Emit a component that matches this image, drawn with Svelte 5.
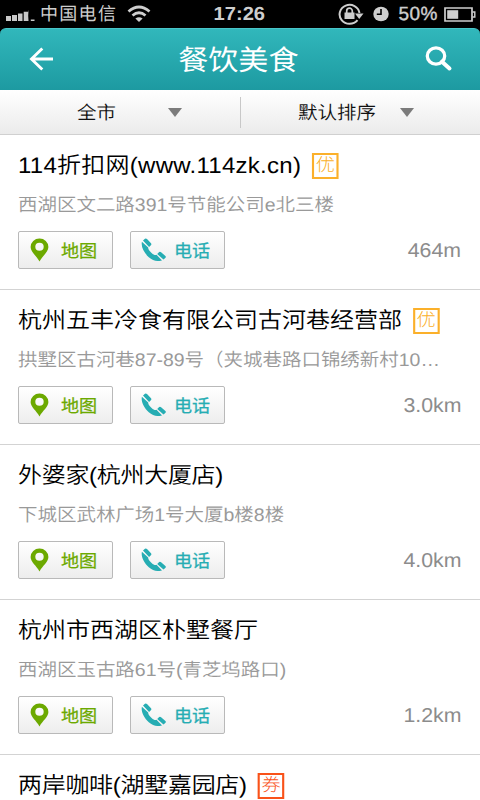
<script>
  const shops = [
    { name: '114折扣网(www.114zk.cn)', tag: '优', address: '西湖区文二路391号节能公司e北三楼', distance: '464m', tracking: 0.25 },
    { name: '杭州五丰冷食有限公司古河巷经营部', tag: '优', address: '拱墅区古河巷87-89号（夹城巷路口锦绣新村10…', distance: '3.0km', tracking: 0 },
    { name: '外婆家(杭州大厦店)', address: '下城区武林广场1号大厦b楼8楼', distance: '4.0km', tracking: -0.28 },
    { name: '杭州市西湖区朴墅餐厅', address: '西湖区玉古路61号(青芝坞路口)', distance: '1.2km', tracking: 0 },
    { name: '两岸咖啡(湖墅嘉园店)', tag: '券', tracking: -0.27 }
  ];
</script>

<div class="screen">
  <div class="status">
    <div class="side">
      <svg class="signal" width="30" height="14" viewBox="0 0 30 14" fill="#c9c9c9">
        <path d="M0 8h5v5H0zM6 7h5v6H6zM12 5.500h4.500V13H12zM17.700 3.800h4.500V13h-4.500zM23 2.500h-.300V13h-.300zM24.800 11.500h3.700V13h-3.700z" />
      </svg>
      <span class="carrier">中国电信</span>
      <svg class="wifi" width="24" height="18" viewBox="0 0 24 18" fill="none" stroke="#cecece" stroke-width="2.800">
        <path d="M1.500 6.500Q12-2.500 22.500 6.500M5.500 10.500Q12 5 18.500 10.500" />
        <path d="M12 17L8.400 13.600Q12 10.800 15.600 13.600Z" fill="#cecece" stroke="none" />
      </svg>
    </div>
    <span class="clock">17:26</span>
    <div class="side right">
      <svg width="26" height="24" viewBox="0 0 26 24" fill="none" stroke="#cecece" stroke-width="2">
        <path d="M19.500 18.200A10 9.500 0 1 1 21.500 11" />
        <path d="M17 11.500h8.500L21.200 17z" fill="#cecece" stroke="none" />
        <path d="M6.500 10.500h10v6.500h-10z" fill="#cecece" stroke="none" />
        <path d="M8.700 11V9a2.800 2.800 0 0 1 5.600 0v2" stroke-width="1.700" />
      </svg>
      <svg class="alarm" width="16" height="16" viewBox="0 0 16 16">
        <ellipse cx="8" cy="8" rx="7.700" ry="7.300" fill="#cecece" />
        <path d="M8 3v5.300H3.800" fill="none" stroke="#000" stroke-width="1.600" />
      </svg>
      <span class="percent">50%</span>
      <svg class="battery" width="32" height="15" viewBox="0 0 32 15">
        <path d="M1 1h27v13H1z" fill="none" stroke="#cecece" stroke-width="1.700" />
        <path d="M3.200 3.200h11v8.600h-11z" fill="#cecece" />
        <path d="M28.500 5h2.300v5h-2.300" fill="none" stroke="#cecece" stroke-width="1.400" />
      </svg>
    </div>
  </div>

  <header>
    <svg width="24" height="24" viewBox="0 0 24 24" fill="none" stroke="#fff" stroke-width="2.900">
      <path d="M13.300 1.500L2.500 12l10.800 10.500M2.500 12H24" />
    </svg>
    <h1>餐饮美食</h1>
    <svg width="28" height="26" viewBox="0 0 28 26" fill="none" stroke="#fff">
      <ellipse cx="11" cy="10" rx="8.700" ry="8.200" stroke-width="3.300" />
      <path d="M17 15.700l7.500 6.800" stroke-width="4" stroke-linecap="round" />
    </svg>
  </header>

  <nav>
    <div class="filter city"><span>全市</span><i></i></div>
    <div class="filter sort"><span>默认排序</span><i></i></div>
  </nav>

  <main>
    {#each shops as shop}
      <article>
        <h2 style:letter-spacing={`${shop.tracking}px`}>{shop.name}{#if shop.tag}<b class:coupon={shop.tag === '券'}>{shop.tag}</b>{/if}</h2>
        {#if shop.address}
          <p>{shop.address}</p>
          <div class="actions">
            <button class="map">
              <svg width="19" height="24" viewBox="0 0 19 24">
                <path fill="#6ca900" fill-rule="evenodd" d="M9.500.500A8.800 8.500 0 0 0 .600 9c0 5 5.700 8.500 8.900 14.500C12.700 17.500 18.400 14 18.400 9A8.800 8.500 0 0 0 9.500.500zm0 4.300a4.200 4 0 1 1 0 8 4.200 4 0 0 1 0-8z" />
              </svg>
              <span>地图</span>
            </button>
            <button class="call">
              <svg width="25" height="23" viewBox="0 0 25 23" fill="#26adb3">
                <path d="M.900 3.700C-.200 9 3 15 7.800 19.200c4.300 3.600 9.200 4.600 13.200 3.300l-5.500-5.700c-1.500.600-3-.200-4.900-1.900C8.300 12.800 7 11 7.200 9.400z" />
                <path d="M2 2.600L4 .700q1-.700 2 .300l4 4.300q.800 1-.100 1.900L8.100 8.900zM16.200 16l2-1.900q.900-.600 1.900.200l4.300 3.600q.900.900.100 1.800l-2 1.900z" />
              </svg>
              <span>电话</span>
            </button>
            <span class="distance">{shop.distance}</span>
          </div>
        {/if}
      </article>
    {/each}
  </main>
</div>

<style>
  :global(body) { margin: 0; background: #fff; }
  .screen {
    width: 480px; height: 800px; overflow: hidden;
    background: linear-gradient(#000 40px, #fff 40px);
    font-family: "Liberation Sans", "Noto Sans CJK SC", sans-serif;
    font-weight: 350;
    text-rendering: geometricPrecision;
    display: flex; flex-direction: column;
  }
  svg { display: block; flex: none; }
  span, h1, h2, p { white-space: nowrap; }
  h1, h2, p { margin: 0; font-weight: 350; }
  .status {
    height: 28px; flex: none; background: #000; color: #cecece;
    display: flex; align-items: center; justify-content: space-between;
  }
  .side { width: 200px; display: flex; align-items: center; }
  .signal { margin: 2px 0 0 6px; }
  .carrier { font-size: 18px; letter-spacing: 1.300px; margin-left: 4px; line-height: 24px; font-weight: 400; }
  .wifi { margin-left: 10px; }
  .clock { font-size: 19px; font-weight: 700; margin-top: 2px; transform: translateX(-1px) scaleX(1.060); }
  .right { justify-content: flex-end; }
  .alarm { margin-left: 9px; }
  .percent { font-size: 19px; -webkit-text-stroke: .4px #cecece; letter-spacing: .5px; margin: 2px 0 0 9px; }
  .battery { margin: 0 4px 0 6px; }
  header {
    height: 62px; flex: none; box-sizing: border-box; padding: 0 27px 0 29px;
    display: flex; align-items: center; justify-content: space-between;
    background: linear-gradient(#31b7bb, #1d9aa1);
    border-top: 1px solid #49c5c8; border-radius: 6px 6px 0 0;
  }
  h1 { font-size: 28.200px; line-height: 40px; color: #fff; font-weight: 400; transform: translateX(-1px) scaleX(1.065); }
  header svg { margin-top: -1px; }
  nav {
    height: 45px; flex: none; box-sizing: border-box; display: flex; align-items: center;
    background: linear-gradient(#fff, #ebebeb); border-bottom: 1px solid #d0d0d0;
  }
  .filter {
    width: 240px; height: 31px; box-sizing: border-box; display: flex; align-items: center;
    font-size: 18.300px; color: #111;
  }
  .filter span { transform: scaleX(1.065); transform-origin: left; }
  .city { width: 241px; padding-left: 77px; border-right: 1px solid #c8c8c8; }
  .sort { width: 239px; padding-left: 57px; }
  i { border: 7px solid transparent; border-top: 9px solid #7b7b7b; border-bottom: 0; }
  .city i { margin-left: 54px; }
  .sort i { margin-left: 29px; }
  article {
    height: 155px; box-sizing: border-box; padding: 13px 18px 0;
    border-bottom: 1px solid #d3d3d3; background: #fff;
  }
  h2, p { width: max-content; transform: scaleX(1.065); transform-origin: left; }
  h2 { font-size: 22.540px; height: 35px; line-height: 35px; color: #000; display: flex; align-items: center; }
  h2 b {
    width: 25.500px; height: 26px; box-sizing: border-box; margin-left: 10px;
    border: 2px solid #fbb02a; color: #fbb02a; font-size: 18px; font-weight: 300;
    line-height: 21px; text-align: center; letter-spacing: 0;
  }
  h2 b.coupon { color: #f95219; border-color: #f95219; }
  p { font-size: 18.300px; height: 42px; line-height: 44px; color: #999; }
  .actions { height: 38px; margin-top: 6px; display: flex; align-items: center; }
  button {
    width: 95px; height: 38px; box-sizing: border-box; padding: 0; margin-right: 17px;
    border: 1px solid #b9b9b9; border-radius: 2px; background: linear-gradient(#fff, #ededed);
    font-family: inherit; font-size: 17px; font-weight: 400; -webkit-text-stroke: .25px currentColor;
    display: flex; align-items: center;
  }
  button span { margin-top: -2px; transform: scaleX(1.065); transform-origin: left; }
  button svg { margin-top: -1px; }
  .map { color: #6ca900; padding-left: 11px; }
  .map span { margin-left: 12px; }
  .call { color: #26adb3; padding-left: 10px; }
  .call span { margin-left: 8px; }
  .distance { margin: 3px 1px 0 auto; font-size: 20px; color: #8c8c8c; transform: scaleX(1.065); transform-origin: right; }
</style>
